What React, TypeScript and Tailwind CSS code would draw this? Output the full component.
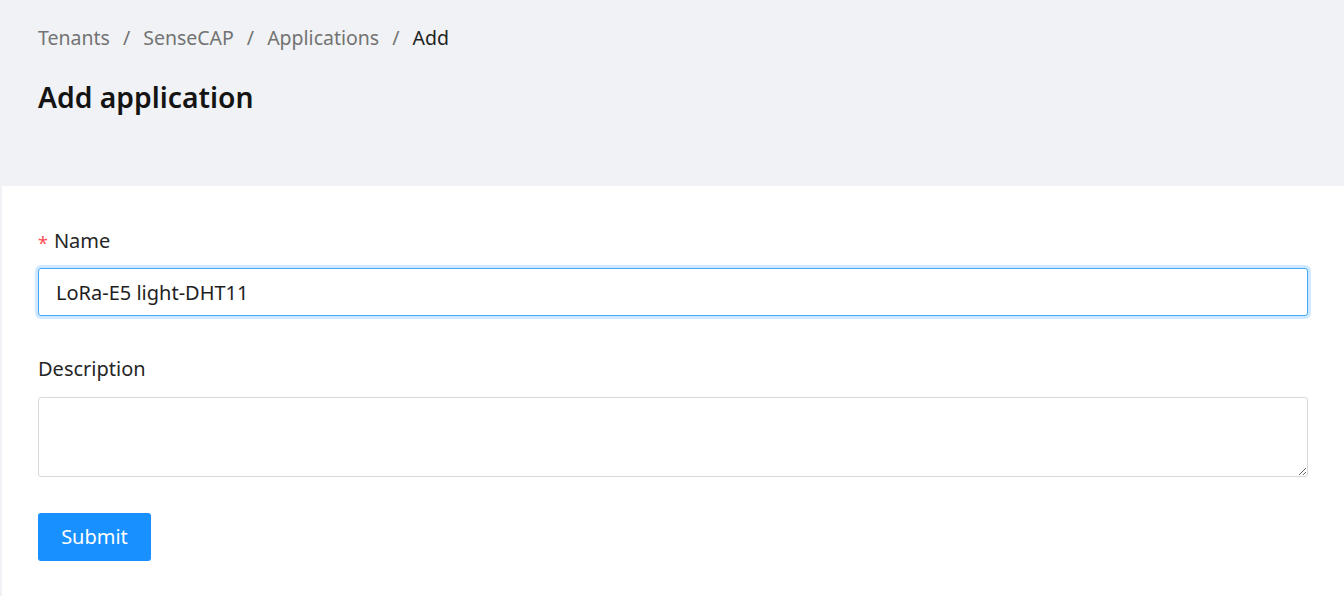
import React from 'react'

const font = { fontFamily: '"Noto Sans", "Open Sans", sans-serif' }

const App: React.FC = () => {
  return (
    <div className="min-h-[596px] w-full bg-[#f0f2f5]" style={font}>
      {/* 헤더 영역 */}
      <div className="px-[38px] pt-[23px] pb-[69px]">
        <div className="flex items-center h-[30px] text-[19.5px] leading-[30px] text-[#737373]">
          <span>Tenants</span>
          <span className="mx-[13px]">/</span>
          <span>SenseCAP</span>
          <span className="mx-[13px]">/</span>
          <span>Applications</span>
          <span className="mx-[13px]">/</span>
          <span className="text-[#1f1f1f]">Add</span>
        </div>
        <h1 className="mt-[24px] h-[40px] text-[28.3px] leading-[40px] font-semibold text-[#141414]">
          Add application
        </h1>
      </div>

      {/* 폼 카드 */}
      <div className="ml-[2px] bg-white px-[36px] pt-[40px] pb-[35px]">
        <label className="flex items-center h-[30px] text-[20px] leading-[30px] text-[#262626]">
          <span className="mr-[6px] mt-[4px] text-[#ff4d4f] text-[18px]">*</span>
          Name
        </label>
        <input
          readOnly
          value="LoRa-E5 light-DHT11"
          className="mt-[12px] block w-full h-[48px] px-[17px] text-[20px] text-[#1f1f1f] bg-white border border-[#40a9ff] rounded-[3px] shadow-[0_0_0_3px_rgba(24,144,255,0.2)] outline-none"
          style={font}
        />

        <label className="mt-[38px] flex items-center h-[30px] text-[20px] leading-[30px] text-[#262626]">
          Description
        </label>
        <textarea
          className="mt-[13px] block w-full h-[80px] px-[17px] py-[6px] text-[20px] bg-white border border-[#d9d9d9] rounded-[3px] outline-none"
          style={font}
        />

        <button className="mt-[36px] h-[48px] w-[113px] rounded-[3px] bg-[#1890ff] text-white text-[20px]">
          Submit
        </button>
      </div>
    </div>
  )
}

export default App
